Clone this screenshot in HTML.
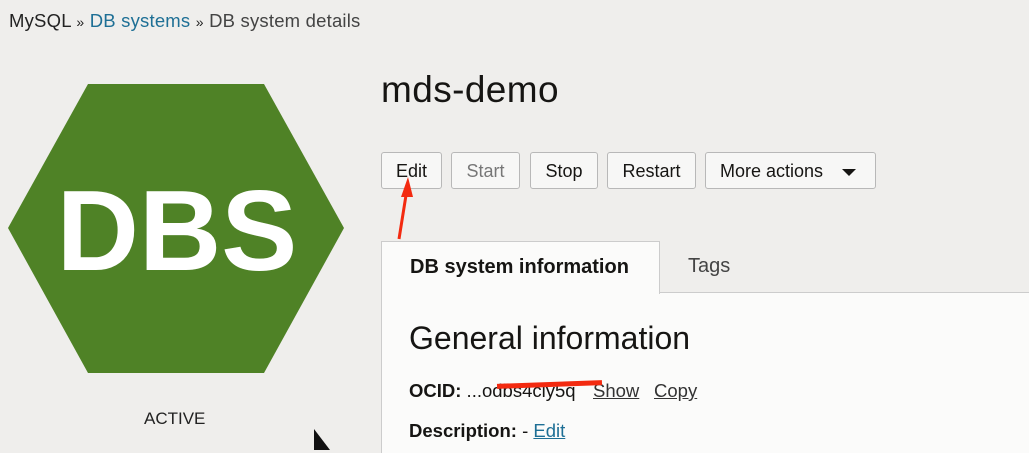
<!DOCTYPE html><html><head><style>
body{margin:0;width:1029px;height:450px;overflow:hidden;background:#efeeec;font-family:"Liberation Sans",sans-serif;position:relative}
.a{position:absolute}
.btn{position:absolute;top:152px;height:37px;border:1px solid #b8b8b8;border-radius:3px;background:#f7f7f6;font-size:18px;line-height:37px;text-align:center;color:#161513;box-sizing:border-box}
</style></head><body>
<div class="a" style="left:9px;top:10px;font-size:18.5px;color:#222;letter-spacing:0.2px">MySQL <span style="font-size:14px">»</span> <span style="color:#1e6f95">DB systems</span> <span style="font-size:14px">»</span> <span style="color:#444">DB system details</span></div>
<svg class="a" style="left:0;top:0" width="360" height="400"><polygon points="8,228 88,84 264,84 344,228 264,373 88,373" fill="#4f8226"/><text x="177" y="270" font-family="Liberation Sans" font-weight="bold" font-size="114" fill="#fff" text-anchor="middle">DBS</text></svg>
<div class="a" style="left:144px;top:409px;font-size:17px;color:#222">ACTIVE</div>
<div class="a" style="left:381px;top:69px;font-size:37px;color:#161513;letter-spacing:0.4px">mds-demo</div>
<div class="btn" style="left:381px;width:61px">Edit</div>
<div class="btn" style="left:451px;width:69px;color:#777">Start</div>
<div class="btn" style="left:530px;width:68px">Stop</div>
<div class="btn" style="left:607px;width:89px">Restart</div>
<div class="btn" style="left:705px;width:171px;text-align:left;padding-left:14px">More actions <span style="position:absolute;left:136px;top:16px;border-left:7px solid transparent;border-right:7px solid transparent;border-top:7px solid #161513"></span></div>
<div class="a" style="left:381px;top:292px;width:648px;height:160px;background:#fbfbfa;border-left:1px solid #ccc;border-top:1px solid #ccc"></div>
<div class="a" style="left:381px;top:241px;width:279px;height:53px;background:#fbfbfa;border:1px solid #ccc;border-bottom:none;box-sizing:border-box"></div>
<div class="a" style="left:410px;top:256px;font-size:20px;font-weight:bold;color:#161513">DB system information</div>
<div class="a" style="left:688px;top:255px;font-size:20px;color:#444">Tags</div>
<div class="a" style="left:409px;top:320px;font-size:32px;color:#161513">General information</div>
<div class="a" style="left:409px;top:380px;font-size:18.5px;color:#161513"><b>OCID:</b> ...odbs4cly5q</div>
<div class="a" style="left:593px;top:380px;font-size:18.5px"><u style="color:#333">Show</u></div>
<div class="a" style="left:654px;top:380px;font-size:18.5px"><u style="color:#333">Copy</u></div>
<div class="a" style="left:497px;top:382px;width:105px;height:5px;background:#f32a10;transform:rotate(-2deg)"></div>
<div class="a" style="left:409px;top:420px;font-size:18.5px;color:#161513"><b>Description:</b> - <u style="color:#1e6f95">Edit</u></div>
<svg class="a" style="left:390px;top:175px" width="30" height="70"><line x1="9" y1="64" x2="17" y2="14" stroke="#f32a10" stroke-width="3"/><polygon points="18,2 11,22 23,22" fill="#f32a10"/></svg>
<svg class="a" style="left:312px;top:428px" width="20" height="22"><polygon points="2,1 2,22 18,22" fill="#111"/></svg>
</body></html>
